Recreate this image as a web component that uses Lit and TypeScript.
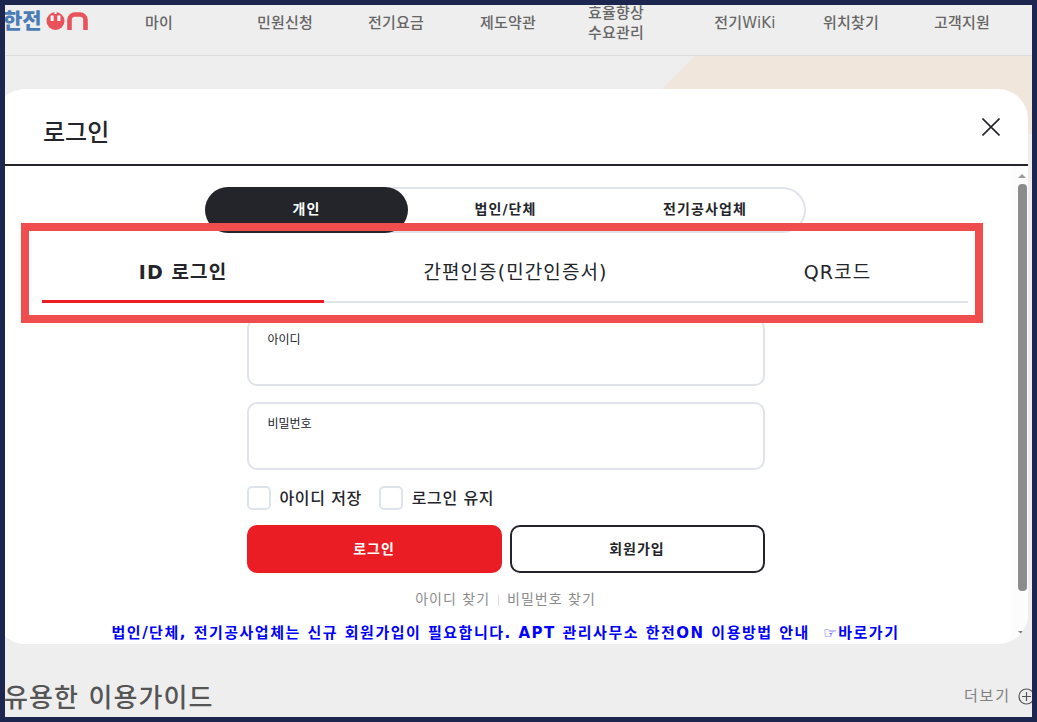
import {LitElement, html, css} from 'lit';
import {customElement} from 'lit/decorators.js';

const NAV = ['마이', '민원신청', '전기요금', '제도약관', '효율향상\n수요관리', '전기WiKi', '위치찾기', '고객지원'];
const NAV_CENTERS = [159, 285, 396, 508, 616, 745, 851, 962];

@customElement('app-root')
export class AppRoot extends LitElement {
  static override styles = css`
    :host {
      display: block;
      width: 1037px;
      height: 722px;
      font-family: 'DejaVu Sans', 'Noto Sans CJK KR', sans-serif;
    }

    .frame {
      position: relative;
      box-sizing: border-box;
      width: 1037px;
      height: 722px;
      border: 5px solid #1c264e;
      background: #eeeeee;
      overflow: hidden;
    }

    .nav {
      position: relative;
      height: 50px;
      border-bottom: 1px solid #dcdcdc;
      color: #666;
      font-size: 15px;
      font-weight: 500;
      letter-spacing: 0.2px;
    }

    .logo {
      position: absolute;
      left: -2px;
      top: 7px;
      display: flex;
      align-items: center;
      height: 18px;
      gap: 3px;
      font-size: 21px;
      line-height: 18px;
      font-weight: 900;
      color: #4a7cb5;
      letter-spacing: 0;
    }

    .nav-item {
      position: absolute;
      top: 2px;
      height: 32px;
      display: flex;
      align-items: center;
      text-align: center;
      white-space: pre;
      line-height: 20px;
      transform: translateX(-50%);
    }

    .deco {
      position: absolute;
      right: 0;
      top: 51px;
      width: 372px;
      height: 78px;
      background: #f0e6dc;
      clip-path: polygon(35px 0, 100% 0, 100% 100%, 0 100%, 0 35px);
    }

    .modal {
      position: absolute;
      left: -10px;
      top: 84px;
      width: 1033px;
      height: 555px;
      background: #fff;
      border-radius: 30px;
      overflow: hidden;
    }

    .modal-head {
      height: 75px;
      border-bottom: 2px solid #23252b;
      display: flex;
      align-items: center;
      justify-content: space-between;
      padding: 0 28px 0 48px;
    }

    .modal-head h1 {
      margin: 0;
      font-size: 24px;
      line-height: 30px;
      font-weight: 500;
      color: #23252b;
      position: relative;
      top: 6px;
    }

    .close {
      display: block;
      margin-top: 1px;
    }

    .scroll {
      position: absolute;
      right: 0;
      top: 77px;
      bottom: 0;
      width: 17px;
      background: #fcfcfc;
    }

    .thumb {
      position: absolute;
      left: 7px;
      top: 18px;
      width: 9px;
      height: 407px;
      background: #8c8c8c;
      border-radius: 4px;
    }

    .arrow-up,
    .arrow-down {
      position: absolute;
      left: 7px;
      width: 0;
      height: 0;
      border-left: 4px solid transparent;
      border-right: 4px solid transparent;
    }

    .arrow-up {
      top: 8px;
      border-bottom: 4px solid #9a9a9a;
    }

    .arrow-down {
      bottom: 9px;
      border-top: 4px solid #808080;
    }

    .body {
      display: flex;
      flex-direction: column;
      align-items: center;
      padding-top: 21px;
      padding-right: 12px;
    }

    .segments {
      display: flex;
      box-sizing: border-box;
      width: 601px;
      height: 46px;
      border: 2px solid #e0e3ea;
      border-radius: 23px;
      font-size: 14px;
      font-weight: 700;
      letter-spacing: 1.1px;
      color: #23252b;
    }

    .segments div {
      display: flex;
      align-items: center;
      justify-content: center;
      padding-bottom: 4px;
    }

    .segments .on {
      width: 203px;
      margin: -2px 0 -2px -2px;
      background: #23252b;
      color: #fff;
      border-radius: 23px;
    }

    .segments .tab-b {
      width: 195px;
    }

    .segments .tab-c {
      flex: 1;
      padding-left: 3px;
    }

    .tabs {
      display: flex;
      box-sizing: border-box;
      width: 926px;
      height: 70px;
      margin-left: -1px;
      border-bottom: 2px solid #e0e3ea;
      font-size: 19px;
      letter-spacing: 1.1px;
      color: #23252b;
    }

    .tabs div {
      display: flex;
      align-items: center;
      justify-content: center;
      padding-top: 7px;
    }

    .tabs .active {
      width: 282px;
      font-weight: 700;
      border-bottom: 3px solid #ec1c24;
      margin-bottom: -2px;
      box-sizing: border-box;
    }

    .tabs .mid {
      width: 383px;
    }

    .tabs .last {
      width: 261px;
    }

    .form {
      width: 518px;
      margin-top: 15px;
    }

    .field {
      box-sizing: border-box;
      height: 68px;
      border: 2px solid #e0e3ea;
      border-radius: 10px;
      padding: 12px 19px;
      font-size: 12px;
      line-height: 16px;
      color: #23252b;
      margin-bottom: 16px;
    }

    .checks {
      display: flex;
      align-items: center;
      height: 24px;
      font-size: 16px;
      font-weight: 500;
      letter-spacing: 0.6px;
      color: #23252b;
    }

    .box {
      box-sizing: border-box;
      width: 24px;
      height: 24px;
      border: 2px solid #dfe3ec;
      border-radius: 5px;
      margin-right: 9px;
    }

    .checks span {
      margin: 0 17px 2px 0;
    }

    .buttons {
      display: flex;
      gap: 8px;
      margin-top: 15px;
    }

    .btn {
      box-sizing: border-box;
      width: 255px;
      height: 48px;
      padding-bottom: 2px;
      border-radius: 10px;
      display: flex;
      align-items: center;
      justify-content: center;
      font-size: 14px;
      font-weight: 700;
      letter-spacing: 1px;
    }

    .btn.red {
      background: #ea1d24;
      color: #fff;
    }

    .btn.white {
      border: 2px solid #23252b;
      color: #23252b;
    }

    .links {
      display: flex;
      justify-content: center;
      align-items: center;
      margin-top: 14px;
      font-size: 14px;
      letter-spacing: 1px;
      line-height: 24px;
      color: #8c8c8c;
    }

    .links i {
      display: block;
      width: 1px;
      height: 11px;
      background: #ddd;
      margin: 2px 8px 0;
    }

    .notice {
      margin-top: 12px;
      font-size: 15px;
      line-height: 20px;
      letter-spacing: 1.5px;
      font-weight: 700;
      color: #0000ff;
      white-space: pre;
      text-align: center;
    }

    .notice-hand {
      font-weight: 400;
    }

    .guide {
      position: absolute;
      left: -1px;
      top: 675px;
      font-size: 26px;
      line-height: 36px;
      font-weight: 500;
      color: #555;
      letter-spacing: 1.1px;
    }

    .more {
      position: absolute;
      right: -3px;
      top: 681px;
      display: flex;
      align-items: center;
      gap: 7px;
      font-size: 15px;
      letter-spacing: 1.9px;
      line-height: 20px;
      color: #808080;
    }

    .annotation {
      position: absolute;
      left: 16px;
      top: 218px;
      width: 962px;
      height: 100px;
      box-sizing: border-box;
      border: 8px solid #f04d4f;
    }
  `;

  override render() {
    return html`
      <div class="frame">
        <div class="nav">
          <div class="logo">
            한전
            <svg width="43" height="18" viewBox="0 0 43 18">
              <circle cx="10.5" cy="9" r="9" fill="#e8525a" />
              <rect fill="#fff" x="5.6" y="3.5" width="3" height="5.5" />
              <rect fill="#fff" x="12.4" y="3.5" width="3" height="5.5" />
              <rect fill="#fff" x="9.5" y="0" width="2" height="2" />
              <path fill="none" stroke="#e8525a" stroke-width="4.6" d="M24.5 18V8A5.5 5.5 0 0 1 30 2.500h5A5.500 5.500 0 0 1 40.500 8v10" />
            </svg>
          </div>
          ${NAV.map(
            (label, i) => html`<div class="nav-item" style="left:${NAV_CENTERS[i] - 5}px">${label}</div>`
          )}
        </div>
        <div class="deco"></div>

        <div class="modal">
          <div class="modal-head">
            <h1>로그인</h1>
            <svg class="close" width="18" height="18" viewBox="0 0 18 18">
              <path d="M0.5 0.5L17.5 17.5M17.5 0.5L0.5 17.5" stroke="#23252b" stroke-width="1.6" fill="none" />
            </svg>
          </div>
          <div class="scroll">
            <div class="arrow-up"></div>
            <div class="thumb"></div>
            <div class="arrow-down"></div>
          </div>
          <div class="body">
            <div class="segments">
              <div class="on">개인</div>
              <div class="tab-b">법인/단체</div>
              <div class="tab-c">전기공사업체</div>
            </div>
            <div class="tabs">
              <div class="active">ID 로그인</div>
              <div class="mid">간편인증(민간인증서)</div>
              <div class="last">QR코드</div>
            </div>
            <div class="form">
              <div class="field">아이디</div>
              <div class="field">비밀번호</div>
              <div class="checks">
                <div class="box"></div>
                <span>아이디 저장</span>
                <div class="box"></div>
                <span>로그인 유지</span>
              </div>
              <div class="buttons">
                <div class="btn red">로그인</div>
                <div class="btn white">회원가입</div>
              </div>
              <div class="links">아이디 찾기<i></i>비밀번호 찾기</div>
            </div>
            <div class="notice">법인/단체, 전기공사업체는 신규 회원가입이 필요합니다. APT 관리사무소 한전ON 이용방법 안내  <span class="notice-hand">☞</span>바로가기</div>
          </div>
        </div>

        <div class="guide">유용한 이용가이드</div>
        <div class="more">
          더보기
          <svg width="17" height="17" viewBox="0 0 17 17">
            <circle cx="8.5" cy="8.5" r="7.5" fill="none" stroke="#555" stroke-width="1.2" />
            <path d="M8.5 4v9M4 8.5h9" stroke="#555" stroke-width="1.2" />
          </svg>
        </div>
        <div class="annotation"></div>
      </div>
    `;
  }
}

declare global {
  interface HTMLElementTagNameMap {
    'app-root': AppRoot;
  }
}
